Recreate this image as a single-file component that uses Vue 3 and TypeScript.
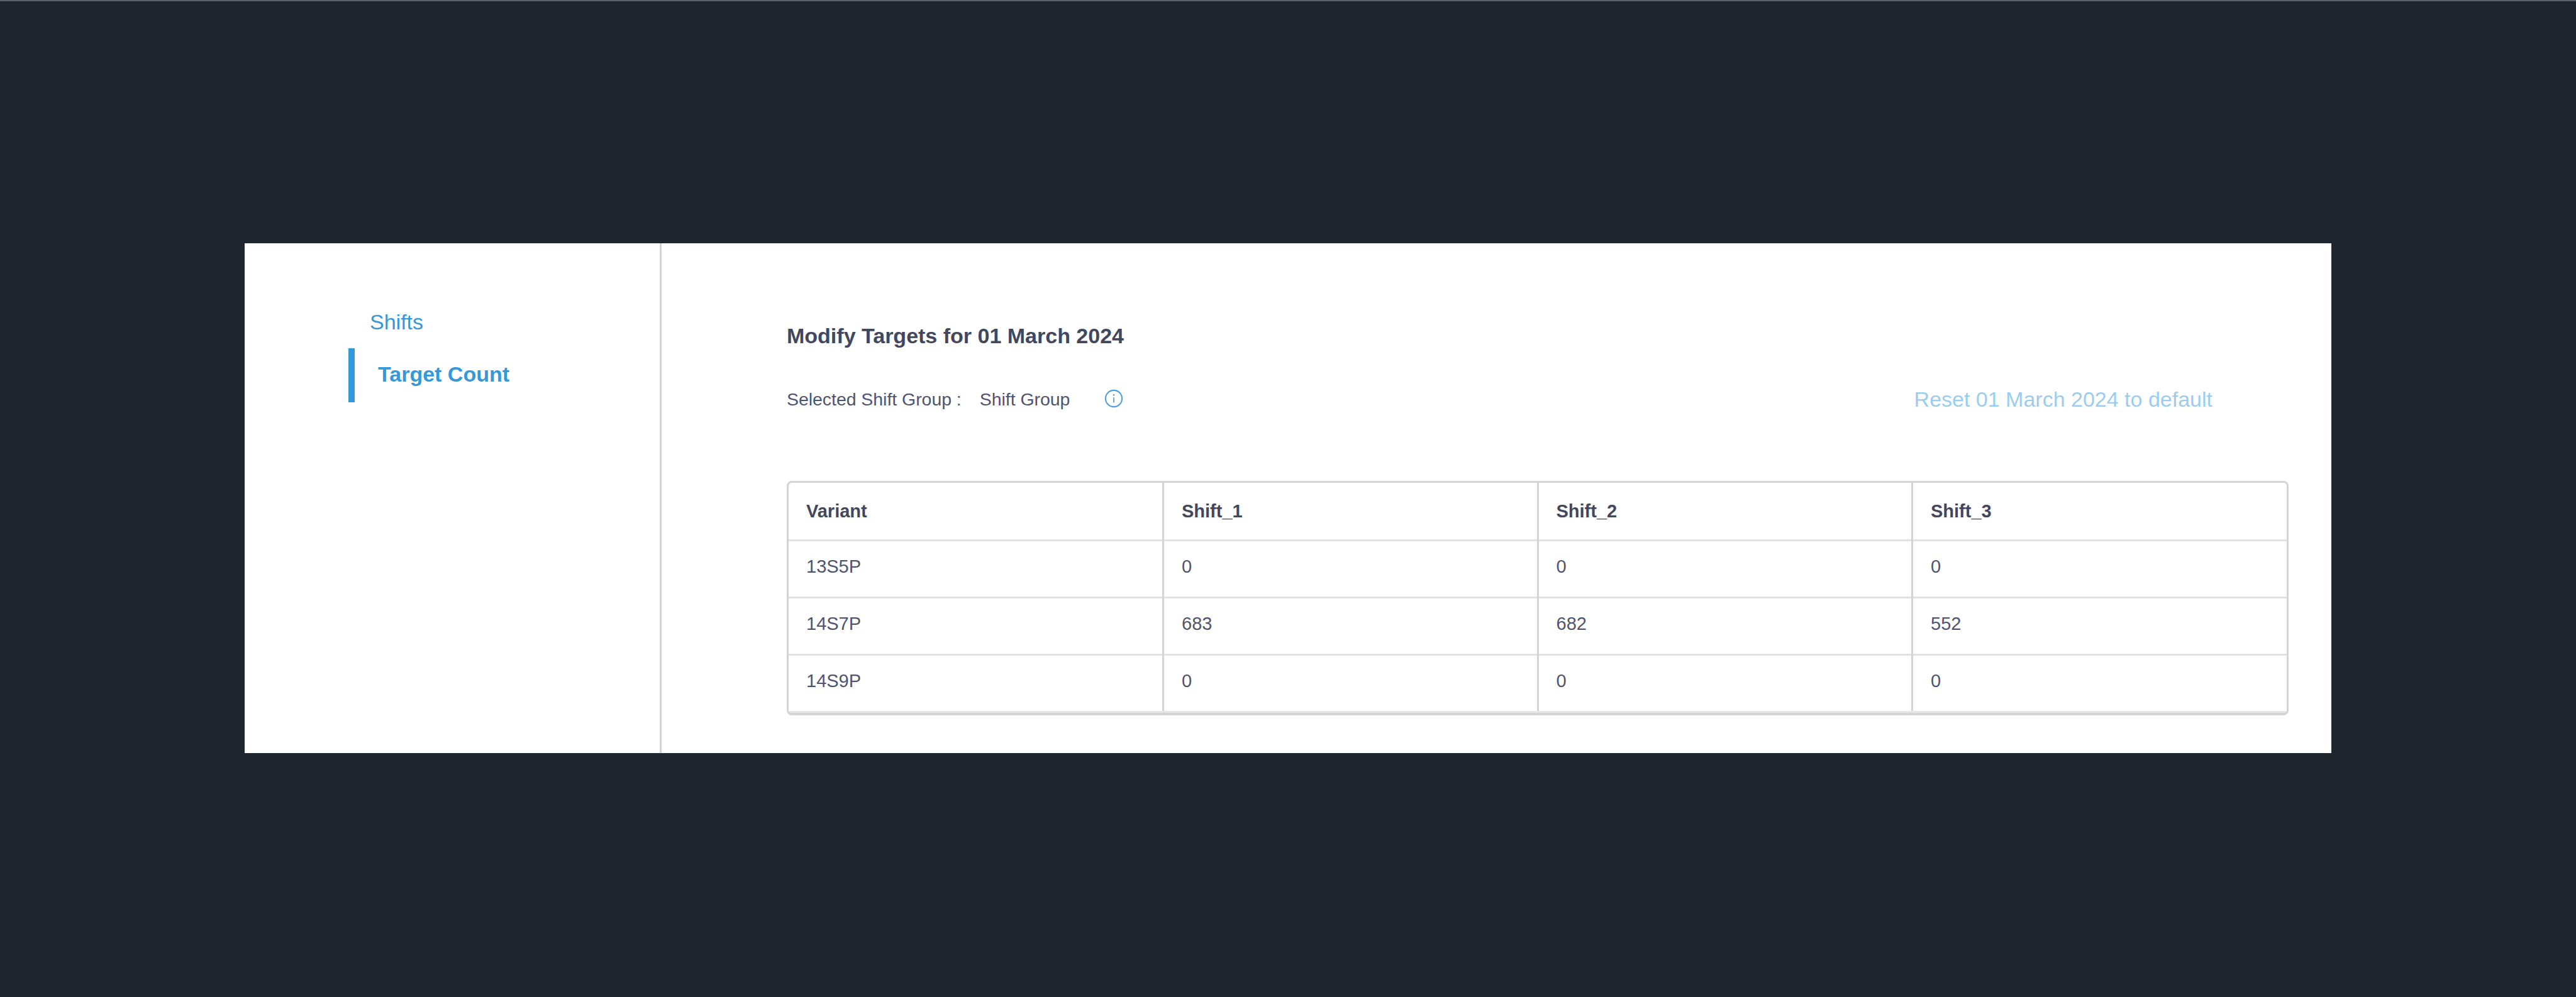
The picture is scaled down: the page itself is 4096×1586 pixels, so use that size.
<script setup lang="ts">
const rows: string[][] = [
  ['13S5P', '0', '0', '0'],
  ['14S7P', '683', '682', '552'],
  ['14S9P', '0', '0', '0'],
]
const heads: string[] = ['Variant', 'Shift_1', 'Shift_2', 'Shift_3']
</script>

<template>
  <div class="page">
    <div class="panel">
      <aside class="side">
        <div class="link">Shifts</div>
        <div class="link active">Target Count</div>
      </aside>
      <main class="main">
        <h1 class="title">Modify Targets for 01 March 2024</h1>
        <div class="bar">
          <span class="label">Selected Shift Group :</span>
          <span class="value">Shift Group</span>
          <svg class="info" viewBox="0 0 32 32" width="30" height="30" fill="none">
            <circle cx="16" cy="16" r="14" stroke="#4f9fe0" stroke-width="2.2" />
            <path d="M16 14v9" stroke="#6a9cc7" stroke-width="2" />
            <circle cx="16" cy="10" r="1.4" fill="#6a9cc7" />
          </svg>
          <span class="reset">Reset 01 March 2024 to default</span>
        </div>
        <div class="table-wrap">
          <table class="grid">
            <thead>
              <tr>
                <th v-for="h in heads" :key="h">{{ h }}</th>
              </tr>
            </thead>
            <tbody>
              <tr v-for="r in rows" :key="r[0]">
                <td v-for="(c, i) in r" :key="i">{{ c }}</td>
              </tr>
            </tbody>
          </table>
        </div>
      </main>
    </div>
  </div>
</template>

<style>
html, body { margin: 0; background: #1e252d; }
</style>

<style scoped>
.page {
  width: 4096px;
  height: 1586px;
  box-sizing: border-box;
  padding: 385px 389px;
  background: #1e252d;
  border-top: 2px solid #5a6068;
  font-family: "Liberation Sans", Arial, sans-serif;
  overflow: hidden;
}
.panel {
  display: flex;
  height: 811px;
  background: #fff;
}
.side {
  width: 663px;
  box-sizing: border-box;
  flex: none;
  border-right: 3px solid #d2d2d2;
  padding: 98px 0 0 165px;
}
.link {
  color: #3498db;
  font-size: 34px;
  line-height: 54px;
  padding-left: 34px;
}
.active {
  margin-top: 15px;
  height: 86px;
  line-height: 82px;
  border-left: 10px solid #3498db;
  font-weight: 700;
  padding-left: 37px;
}
.main {
  flex: 1;
  min-width: 0;
  padding: 125px 68px 0 199px;
}
.title {
  margin: 0;
  font-size: 34px;
  line-height: 44px;
  font-weight: 700;
  color: #43475e;
}
.bar {
  display: flex;
  align-items: center;
  margin-top: 54px;
  height: 50px;
  color: #4f5370;
  font-size: 28.4px;
}
.value { margin-left: 29px; }
.info { margin-left: 55px; margin-top: -3px; }
.reset {
  margin-left: auto;
  margin-right: 121px;
  color: #9ccdef;
  font-size: 34px;
}
.table-wrap {
  margin-top: 105px;
  border: 3px solid #d4d4d4;
  border-bottom-width: 4px;
  border-radius: 8px;
  overflow: hidden;
}
.grid {
  width: 100%;
  border-collapse: collapse;
  table-layout: fixed;
  color: #50546f;
  font-size: 29px;
}
th, td {
  height: 91px;
  padding: 0 0 0 28px;
  text-align: left;
  border-left: 3px solid #d4d4d4;
  border-top: 3px solid #e2e2e2;
  box-sizing: border-box;
  font-weight: 400;
}
td { padding-bottom: 6px; }
th { font-weight: 700; color: #43475e; border-top: 0; padding-top: 2px; }
th:first-child, td:first-child { border-left: 0; }
tbody tr:last-child td { border-bottom: 3px solid #e6e6e6; }
</style>
